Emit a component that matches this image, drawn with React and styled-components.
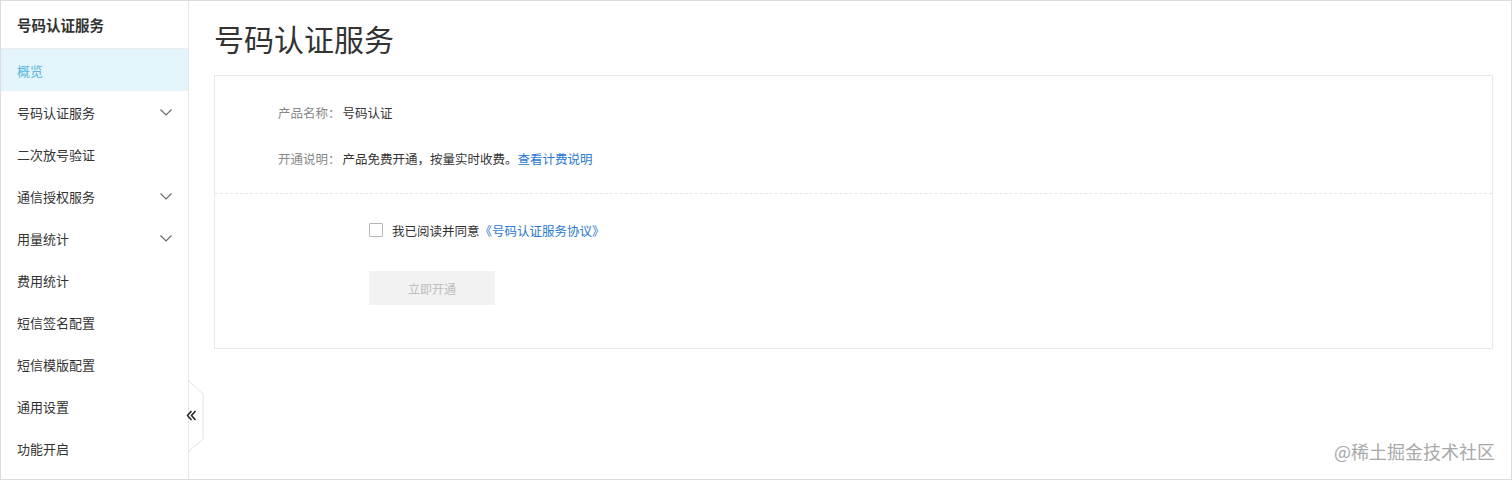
import React from 'react';
import styled, { createGlobalStyle } from 'styled-components';

const GlobalStyle = createGlobalStyle`
  * { box-sizing: border-box; }
  body {
    margin: 0;
    background: #fff;
    font-family: "Noto Sans CJK SC", "Noto Sans", "Liberation Sans", sans-serif;
    color: #333;
  }
`;

const Frame = styled.div`
  position: relative;
  width: 1512px;
  height: 480px;
  border: 1px solid #dcdcdc;
  display: flex;
  overflow: hidden;
`;

const Sidebar = styled.aside`
  position: relative;
  width: 188px;
  flex: none;
  border-right: 1px solid #e6e6e6;
  display: flex;
  flex-direction: column;
`;

const SideHeader = styled.div`
  height: 48px;
  padding-left: 16px;
  display: flex;
  align-items: center;
  font-size: 14.5px;
  font-weight: 700;
  color: #333;
  border-bottom: 1px solid #ececec;
`;

const NavItem = styled.div`
  height: 42px;
  padding: 0 15px 0 16px;
  display: flex;
  align-items: center;
  justify-content: space-between;
  font-size: 13px;
  color: ${p => (p.$active ? '#56b6dc' : '#333')};
  background: ${p => (p.$active ? '#e3f4fb' : 'transparent')};
`;

const CollapseTab = styled.div`
  position: absolute;
  left: 183px;
  top: 379px;
  width: 22px;
  height: 72px;
  line-height: 0;
`;

const Main = styled.main`
  flex: 1;
  padding: 0 18px 0 25px;
  display: flex;
  flex-direction: column;
`;

const Title = styled.h1`
  margin: 0;
  height: 74px;
  display: flex;
  align-items: center;
  font-size: 30px;
  font-weight: 400;
  color: #333;
`;

const Card = styled.section`
  border: 1px solid #e9e9e9;
  background: #fff;
`;

const InfoBlock = styled.div`
  padding: 26px 0 25px 63px;
  display: flex;
  flex-direction: column;
  gap: 26px;
  border-bottom: 1px dashed #e6e6e6;
`;

const Row = styled.div`
  height: 20px;
  display: flex;
  align-items: center;
  font-size: 12.5px;
  color: #333;
`;

const Label = styled.span`
  color: #888;
  margin-right: 2px;
`;

const Link = styled.a`
  color: #2a78d0;
  text-decoration: none;
  cursor: pointer;
`;

const AgreeBlock = styled.div`
  padding: 26px 0 43px 154px;
  display: flex;
  flex-direction: column;
  gap: 31px;
`;

const Checkbox = styled.span`
  width: 14px;
  height: 14px;
  border: 1px solid #b5b5b5;
  border-radius: 1px;
  background: #fff;
  margin-right: 9px;
`;

const OpenButton = styled.button`
  width: 126px;
  height: 34px;
  border: none;
  background: #f2f2f2;
  color: #bdbdbd;
  font-family: inherit;
  font-size: 12px;
  cursor: not-allowed;
`;

const Watermark = styled.div`
  position: absolute;
  right: 16px;
  bottom: 15px;
  font-size: 18px;
  color: #a0a0a0;
  opacity: 0.9;
`;

const Chevron = () => (
  <svg width="14" height="14" viewBox="0 0 14 14" fill="none">
    <path d="M1.5 4.5 L7 10 L12.5 4.5" stroke="#666" strokeWidth="1.1" />
  </svg>
);

const navItems = [
  { name: '概览', active: true },
  { name: '号码认证服务', sub: true },
  { name: '二次放号验证' },
  { name: '通信授权服务', sub: true },
  { name: '用量统计', sub: true },
  { name: '费用统计' },
  { name: '短信签名配置' },
  { name: '短信模版配置' },
  { name: '通用设置' },
  { name: '功能开启' },
];

export default function App() {
  return (
    <>
      <GlobalStyle />
      <Frame>
        <Sidebar>
          <SideHeader>号码认证服务</SideHeader>
          {navItems.map(item => (
            <NavItem key={item.name} $active={item.active}>
              {item.name}
              {item.sub && <Chevron />}
            </NavItem>
          ))}
          <CollapseTab>
            <svg width="22" height="72" viewBox="0 0 22 72">
              <path d="M5 0 L5 1 L19 14 L19 59 L5 71 L5 72" fill="#fff" stroke="#e2e2e2" strokeWidth="1" />
              <path d="M7.5 31 L3.5 35.5 L7.5 40 M11.5 31 L7.5 35.5 L11.5 40" fill="none" stroke="#222" strokeWidth="1.5" />
            </svg>
          </CollapseTab>
        </Sidebar>
        <Main>
          <Title>号码认证服务</Title>
          <Card>
            <InfoBlock>
              <Row><Label>产品名称：</Label>号码认证</Row>
              <Row>
                <Label>开通说明：</Label>产品免费开通，按量实时收费。<Link>查看计费说明</Link>
              </Row>
            </InfoBlock>
            <AgreeBlock>
              <Row>
                <Checkbox />我已阅读并同意<Link>《号码认证服务协议》</Link>
              </Row>
              <div><OpenButton disabled>立即开通</OpenButton></div>
            </AgreeBlock>
          </Card>
        </Main>
        <Watermark>@稀土掘金技术社区</Watermark>
      </Frame>
    </>
  );
}
